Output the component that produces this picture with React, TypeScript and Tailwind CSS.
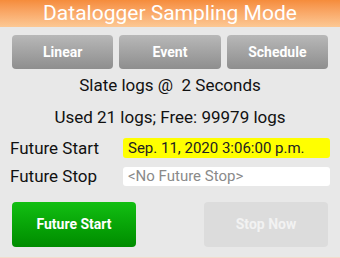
import { JSX } from 'react';

const modes = ['Linear', 'Event', 'Schedule'];

export default function App(): JSX.Element {
  return (
    <div className="w-[340px] h-[258px] bg-[#e8e8e8] font-['Roboto',sans-serif] flex flex-col border-b border-[#f2dccb]">
      <div className="h-[27px] bg-gradient-to-b from-[#f58c3b] to-[#fcc894] flex items-center justify-center text-white text-[21px] leading-none">
        Datalogger Sampling Mode
      </div>
      <div className="flex gap-[6px] px-[12px] mt-[8px]">
        {modes.map((m) => (
          <button
            key={m}
            className="flex-1 h-[34px] rounded-[4px] bg-gradient-to-b from-[#b8b8b8] to-[#8e8e8e] text-white font-bold text-[14px]"
          >
            {m}
          </button>
        ))}
      </div>
      <div className="h-[32px] flex items-center justify-center text-[17px] text-[#111] pt-[2px]">
        Slate logs @&nbsp; 2 Seconds
      </div>
      <div className="h-[32px] flex items-center justify-center text-[17px] text-[#111] pt-[2px]">
        Used 21 logs; Free: 99979 logs
      </div>
      <div className="h-[20px] flex items-center px-[10px] mt-[5px]">
        <div className="w-[113px] text-[17px] leading-none text-[#111]">Future Start</div>
        <div className="flex-1 h-[20px] rounded-[3px] bg-[#ffff00] text-[15px] text-[#222] pl-[5px] flex items-center">
          Sep. 11, 2020 3:06:00 p.m.
        </div>
      </div>
      <div className="h-[19px] flex items-center px-[10px] mt-[9px]">
        <div className="w-[113px] text-[17px] leading-none text-[#111]">Future Stop</div>
        <div className="flex-1 h-[19px] rounded-[3px] bg-white text-[15px] text-[#8a8a8a] pl-[5px] flex items-center">
          &lt;No Future Stop&gt;
        </div>
      </div>
      <div className="flex justify-between px-[12px] mt-[16px]">
        <button className="w-[124px] h-[45px] rounded-[4px] bg-gradient-to-b from-[#12bf12] to-[#008c00] text-white font-bold text-[14px]">
          Future Start
        </button>
        <button className="w-[124px] h-[45px] rounded-[4px] bg-[#dcdcdc] text-[#f2f2f2] font-bold text-[14px]">
          Stop Now
        </button>
      </div>
    </div>
  );
}
